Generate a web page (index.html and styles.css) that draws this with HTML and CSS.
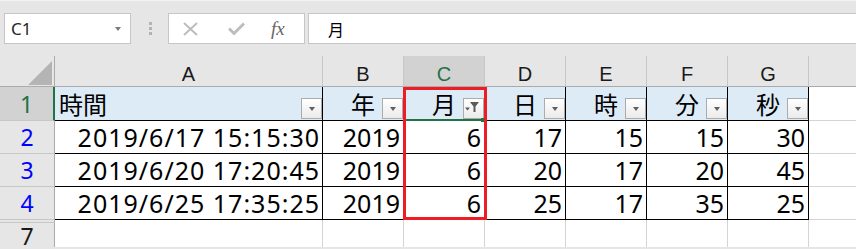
FILE: index.html
```html
<!DOCTYPE html>
<html lang="ja">
<head>
<meta charset="utf-8">
<title>Excel filter</title>
<link rel="stylesheet" href="styles.css">
</head>
<body>
<div class="fbar">
  <div class="namebox"><span class="nb-text">C1</span><span class="nb-arrow"></span></div>
  <div class="grip"><i></i><i></i><i></i></div>
  <div class="fx-btns">
    <svg class="ic-x" width="15" height="14" viewBox="0 0 15 14"><path d="M1 1L14 13M14 1L1 13" stroke="#bdbdbd" stroke-width="2" fill="none"/></svg>
    <svg class="ic-check" width="17" height="14" viewBox="0 0 17 14"><path d="M1 6.5L6 11.5L16 1.5" stroke="#bdbdbd" stroke-width="3" fill="none"/></svg>
    <span class="fx">fx</span>
  </div>
  <div class="finput">月</div>
</div>
<div class="sheet">
  <div class="grid">
    <div class="corner"><svg width="24" height="24" viewBox="0 0 24 24"><path d="M24 0V24H0Z" fill="#b4b4b4"/></svg></div>
    <div class="ch">A</div><div class="ch">B</div><div class="ch sel">C</div><div class="ch">D</div><div class="ch">E</div><div class="ch">F</div><div class="ch">G</div><div class="ch"></div>

    <div class="rh sel">1</div>
    <div class="c t th left">時間<span class="fb"></span></div>
    <div class="c t th">年<span class="fb"></span></div>
    <div class="c t th">月<span class="fb on"><svg width="19" height="19" viewBox="0 0 19 19"><path d="M6 3H15L11.5 7.5V13H9.5V7.5Z" fill="#5a5a5a"/><path d="M1 8.5H6L3.5 11.5Z" fill="#5a5a5a"/></svg></span></div>
    <div class="c t th">日<span class="fb"></span></div>
    <div class="c t th">時<span class="fb"></span></div>
    <div class="c t th">分<span class="fb"></span></div>
    <div class="c t th">秒<span class="fb"></span></div>
    <div class="c"></div>

    <div class="rh blue">2</div>
    <div class="c t dt">2019/6/17 15:15:30</div>
    <div class="c t">2019</div><div class="c t">6</div><div class="c t">17</div><div class="c t">15</div><div class="c t">15</div><div class="c t">30</div>
    <div class="c"></div>

    <div class="rh blue">3</div>
    <div class="c t dt">2019/6/20 17:20:45</div>
    <div class="c t">2019</div><div class="c t">6</div><div class="c t">20</div><div class="c t">17</div><div class="c t">20</div><div class="c t">45</div>
    <div class="c"></div>

    <div class="rh blue">4</div>
    <div class="c t dt">2019/6/25 17:35:25</div>
    <div class="c t">2019</div><div class="c t">6</div><div class="c t">25</div><div class="c t">17</div><div class="c t">35</div><div class="c t">25</div>
    <div class="c"></div>

    <div class="rh hid"></div>
    <div class="c gap"></div><div class="c gap"></div><div class="c gap"></div><div class="c gap"></div><div class="c gap"></div><div class="c gap"></div><div class="c gap"></div><div class="c gap"></div>

    <div class="rh last">7</div>
    <div class="c last"></div><div class="c last"></div><div class="c last"></div><div class="c last"></div><div class="c last"></div><div class="c last"></div><div class="c last"></div><div class="c last"></div>
  </div>
  <div class="selline"></div>
  <div class="handle"></div>
  <div class="redbox"></div>
</div>
</body>
</html>
```
FILE: styles.css
```css
* { box-sizing: border-box; }
html, body { margin: 0; padding: 0; }
body {
  width: 856px;
  height: 249px;
  overflow: hidden;
  background: #e6e6e6;
  font-family: "Noto Sans", "Noto Sans CJK JP", sans-serif;
  color: #000;
}

/* formula bar */
.fbar {
  display: flex;
  align-items: flex-start;
  height: 56px;
  padding-top: 12px;
  border-top: 1px solid #f3f3f3;
}
.namebox {
  margin-left: 4px;
  width: 127px;
  height: 31px;
  background: #fff;
  border: 1px solid #c6c6c6;
  display: flex;
  align-items: center;
  padding-left: 6px;
}
.nb-text { font: 17px "Noto Sans", sans-serif; color: #262626; }
.nb-arrow {
  margin-left: auto;
  margin-right: 9px;
  width: 0;
  height: 0;
  border-left: 3.5px solid transparent;
  border-right: 3.5px solid transparent;
  border-top: 4px solid #7a7a7a;
}
.grip {
  width: 37px;
  height: 31px;
  display: flex;
  flex-direction: column;
  align-items: center;
  justify-content: center;
  gap: 2px;
  padding-left: 1px;
}
.grip i { display: block; width: 3px; height: 3px; background: #b3b3b3; }
.fx-btns {
  width: 137px;
  height: 31px;
  background: #fff;
  border: 1px solid #c6c6c6;
  display: flex;
  align-items: center;
  padding-left: 14px;
}
.ic-check { margin-left: 30px; }
.fx {
  margin-left: 26px;
  font: italic 19px "Liberation Serif", serif;
  color: #666;
  line-height: 1;
}
.finput {
  margin-left: 3px;
  margin-right: -10px;
  flex: 1;
  height: 31px;
  background: #fff;
  border: 1px solid #c6c6c6;
  display: flex;
  align-items: center;
  padding-left: 19px;
  font: 16px "Noto Sans CJK JP", sans-serif;
}

/* sheet */
.sheet { position: relative; }
.grid {
  display: grid;
  grid-template-columns: 55px 268px repeat(7, 81px);
  grid-template-rows: 31px 34px 33px 33px 33px 3px 24px;
}
.corner {
  border-right: 1px solid #ababab;
  border-bottom: 1px solid #ababab;
  display: flex;
  justify-content: flex-end;
  align-items: flex-end;
  padding-right: 2px;
  padding-bottom: 1px;
}
.corner svg { display: block; }
.ch {
  border-right: 1px solid #c6c6c6;
  border-bottom: 1px solid #ababab;
  text-align: center;
  font: 20px/23px "Liberation Sans", sans-serif;
  padding-top: 7px;
  color: #1a1a1a;
}
.ch.sel { background: #d2d2d2; color: #217346; }

.rh {
  border-right: 1px solid #ababab;
  border-bottom: 1px solid #c6c6c6;
  display: flex;
  align-items: center;
  justify-content: center;
  font-size: 23px;
  line-height: 24px;
  color: #1a1a1a;
}
.rh.sel { background: #d2d2d2; color: #217346; border-right: 2px solid #217346; }
.rh.blue { color: #0000ff; }
.rh.last { border-bottom: none; line-height: 22px; padding-top: 1px; }

.c {
  position: relative;
  background: #fff;
  border-right: 1px solid #d4d4d4;
  border-bottom: 1px solid #d4d4d4;
  display: flex;
  align-items: center;
  justify-content: flex-end;
  padding-right: 3px;
  font-size: 25px;
  white-space: nowrap;
}
.c.t { border-right-color: #000; border-bottom-color: #000; }
.c.th {
  background: #ddebf7;
  justify-content: center;
  padding: 0;
  font: 24px "Noto Sans CJK JP", sans-serif;
}
.c.th.left { justify-content: flex-start; padding-left: 4px; }
.c.dt { letter-spacing: 1px; padding-right: 2px; }
.c.gap, .c.last { border-bottom: none; }

/* filter dropdown buttons */
.fb {
  position: absolute;
  right: 0;
  bottom: 1px;
  width: 21px;
  height: 21px;
  border: 1px solid #acacac;
  background: linear-gradient(#ffffff, #ebebeb);
  display: flex;
  align-items: center;
  justify-content: center;
}
.fb::after {
  content: "";
  width: 0;
  height: 0;
  margin-top: 1px;
  border-left: 3.5px solid transparent;
  border-right: 3.5px solid transparent;
  border-top: 4px solid #5f5f5f;
}
.fb.on::after { display: none; }
.fb svg { display: block; }

/* overlays */
.selline {
  position: absolute;
  left: 405px;
  top: 63px;
  width: 77px;
  height: 2px;
  background: #217346;
}
.handle {
  position: absolute;
  left: 481px;
  top: 62px;
  width: 4px;
  height: 4px;
  background: #217346;
}
.redbox {
  position: absolute;
  left: 403px;
  top: 31px;
  width: 84px;
  height: 133px;
  border: 3px solid #ee1c25;
}
```
